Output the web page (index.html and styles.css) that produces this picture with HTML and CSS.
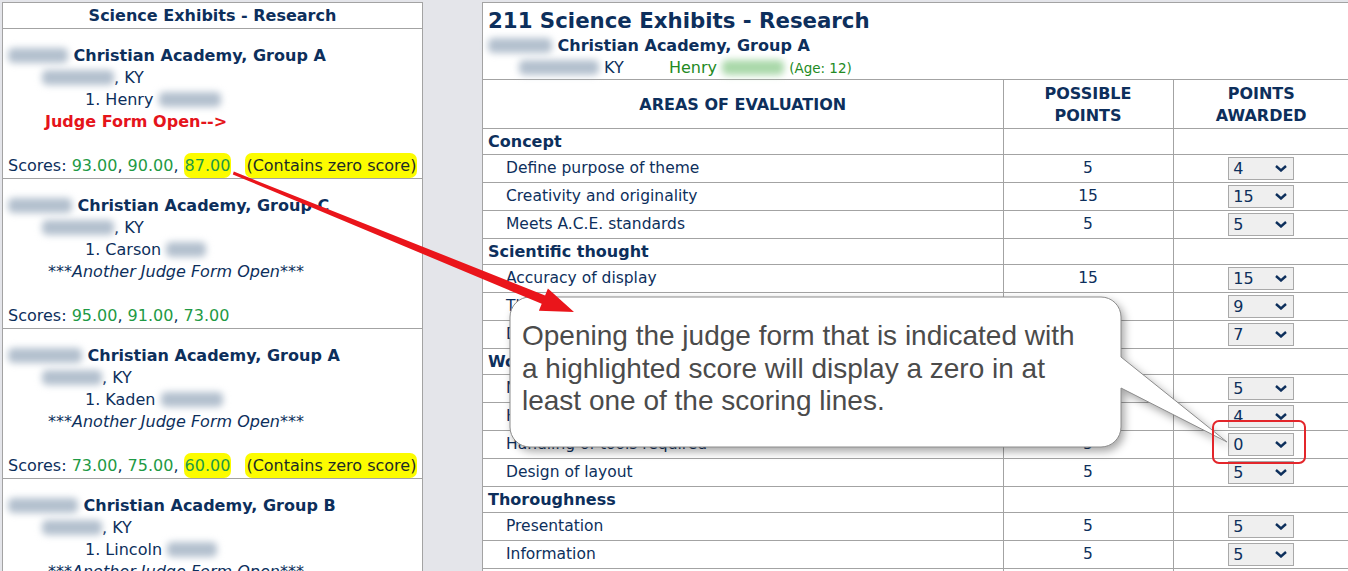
FILE: index.html
```html
<!DOCTYPE html>
<html lang="en">
<head>
    <meta charset="UTF-8">
    <meta name="viewport" content="width=device-width, initial-scale=1.0">
    <title>Judge Form</title>
    <link rel="stylesheet" href="styles.css">
</head>
<body>
    <div class="page">
        <aside class="list">
            <div class="list-head">Science Exhibits - Research</div>

            <div class="entry">
                <div class="school"><span class="blur w60"></span> Christian Academy, Group A</div>
                <div class="city"><span class="blur w72"></span>, KY</div>
                <div class="kid">1. Henry <span class="blur w62"></span></div>
                <div class="open">Judge Form Open--&gt;</div>
                <div class="gap"></div>
                <div class="scores">Scores: <span class="ok">93.00</span>, <span class="ok">90.00</span>, <span class="ok mark">87.00</span><span class="mark zero">(Contains zero score)</span></div>
            </div>

            <div class="entry">
                <div class="school"><span class="blur w64"></span> Christian Academy, Group C</div>
                <div class="city"><span class="blur w72"></span>, KY</div>
                <div class="kid">1. Carson <span class="blur w40"></span></div>
                <div class="other">***Another Judge Form Open***</div>
                <div class="gap"></div>
                <div class="scores">Scores: <span class="ok">95.00</span>, <span class="ok">91.00</span>, <span class="ok">73.00</span></div>
            </div>

            <div class="entry">
                <div class="school"><span class="blur w74"></span> Christian Academy, Group A</div>
                <div class="city"><span class="blur w60"></span>, KY</div>
                <div class="kid">1. Kaden <span class="blur w62"></span></div>
                <div class="other">***Another Judge Form Open***</div>
                <div class="gap"></div>
                <div class="scores">Scores: <span class="ok">73.00</span>, <span class="ok">75.00</span>, <span class="ok mark">60.00</span><span class="mark zero">(Contains zero score)</span></div>
            </div>

            <div class="entry">
                <div class="school"><span class="blur w70"></span> Christian Academy, Group B</div>
                <div class="city"><span class="blur w60"></span>, KY</div>
                <div class="kid">1. Lincoln <span class="blur w50"></span></div>
                <div class="other">***Another Judge Form Open***</div>
            </div>
        </aside>

        <main class="form">
            <div class="form-head">
                <h1 class="title">211 Science Exhibits - Research</h1>
                <div class="sub"><span class="blur w64"></span> Christian Academy, Group A</div>
                <div class="who"><span class="blur w80"></span> KY <span class="name">Henry <span class="blur green w62"></span> <small>(Age: 12)</small></span></div>
            </div>

            <table class="sheet">
                <colgroup>
                    <col class="c-area">
                    <col class="c-poss">
                    <col>
                </colgroup>
                <tr class="head">
                    <th>AREAS OF EVALUATION</th>
                    <th>POSSIBLE<br>POINTS</th>
                    <th>POINTS<br>AWARDED</th>
                </tr>
                <tr class="cat"><td>Concept</td><td></td><td></td></tr>
                <tr><td>Define purpose of theme</td><td>5</td><td><span class="pick"><span>4</span><svg width="12" height="7" viewBox="0 0 12 7"><path d="M1 1l5 4.5L11 1"/></svg></span></td></tr>
                <tr><td>Creativity and originality</td><td>15</td><td><span class="pick"><span>15</span><svg width="12" height="7" viewBox="0 0 12 7"><path d="M1 1l5 4.5L11 1"/></svg></span></td></tr>
                <tr><td>Meets A.C.E. standards</td><td>5</td><td><span class="pick"><span>5</span><svg width="12" height="7" viewBox="0 0 12 7"><path d="M1 1l5 4.5L11 1"/></svg></span></td></tr>
                <tr class="cat"><td>Scientific thought</td><td></td><td></td></tr>
                <tr><td>Accuracy of display</td><td>15</td><td><span class="pick"><span>15</span><svg width="12" height="7" viewBox="0 0 12 7"><path d="M1 1l5 4.5L11 1"/></svg></span></td></tr>
                <tr><td>Thought process shown</td><td>10</td><td><span class="pick"><span>9</span><svg width="12" height="7" viewBox="0 0 12 7"><path d="M1 1l5 4.5L11 1"/></svg></span></td></tr>
                <tr><td>Depth of research</td><td>10</td><td><span class="pick"><span>7</span><svg width="12" height="7" viewBox="0 0 12 7"><path d="M1 1l5 4.5L11 1"/></svg></span></td></tr>
                <tr class="cat"><td>Workmanship</td><td></td><td></td></tr>
                <tr><td>Neatness</td><td>5</td><td><span class="pick"><span>5</span><svg width="12" height="7" viewBox="0 0 12 7"><path d="M1 1l5 4.5L11 1"/></svg></span></td></tr>
                <tr><td>Handmade by student</td><td>5</td><td><span class="pick"><span>4</span><svg width="12" height="7" viewBox="0 0 12 7"><path d="M1 1l5 4.5L11 1"/></svg></span></td></tr>
                <tr><td>Handling of tools required</td><td>5</td><td><span class="pick"><span>0</span><svg width="12" height="7" viewBox="0 0 12 7"><path d="M1 1l5 4.5L11 1"/></svg></span></td></tr>
                <tr><td>Design of layout</td><td>5</td><td><span class="pick"><span>5</span><svg width="12" height="7" viewBox="0 0 12 7"><path d="M1 1l5 4.5L11 1"/></svg></span></td></tr>
                <tr class="cat"><td>Thoroughness</td><td></td><td></td></tr>
                <tr><td>Presentation</td><td>5</td><td><span class="pick"><span>5</span><svg width="12" height="7" viewBox="0 0 12 7"><path d="M1 1l5 4.5L11 1"/></svg></span></td></tr>
                <tr><td>Information</td><td>5</td><td><span class="pick"><span>5</span><svg width="12" height="7" viewBox="0 0 12 7"><path d="M1 1l5 4.5L11 1"/></svg></span></td></tr>
                <tr><td>Bibliography</td><td>5</td><td><span class="pick"><span>5</span><svg width="12" height="7" viewBox="0 0 12 7"><path d="M1 1l5 4.5L11 1"/></svg></span></td></tr>
            </table>
        </main>
    </div>

    <!-- annotation layer drawn over the screenshot -->
    <svg class="marks" width="1348" height="571" viewBox="0 0 1348 571">
        <path class="bubble" d="M530 297H1101A20 20 0 0 1 1121 317V357L1227 442L1121 388V427A20 20 0 0 1 1101 447H530A20 20 0 0 1 510 427V317A20 20 0 0 1 530 297Z"/>
        <rect class="ring" x="1213" y="421" width="92" height="42" rx="6"/>
        <polygon class="arrow" points="233.8,171.6 545.1,295.4 547.9,288.5 574,312 538.9,310.7 541.7,303.8 232.8,174.4"/>
    </svg>
    <div class="note">Opening the judge form that is indicated with<br>a highlighted score will display a zero in at<br>least one of the scoring lines.</div>
</body>
</html>
```

FILE: styles.css
```css
* {
    margin: 0;
    padding: 0;
    box-sizing: border-box;
}

body {
    width: 1348px;
    height: 571px;
    overflow: hidden;
    position: relative;
    background-color: #e4e5ea;
    font-family: "DejaVu Sans", Verdana, sans-serif;
    font-size: 16px;
    color: #0d2f5c;
}

.page {
    display: flex;
    align-items: flex-start;
    gap: 59px;
    padding: 2px 0 0 2px;
}

/* left list */
.list {
    flex: none;
    width: 421px;
    background-color: white;
    border: 1px solid #a3a3a3;
}

.list-head {
    text-align: center;
    font-weight: bold;
    line-height: 25px;
    border-bottom: 1px solid #a3a3a3;
}

.entry {
    padding: 16px 5px 1px;
    line-height: 22px;
    border-bottom: 1px solid #a3a3a3;
    white-space: nowrap;
}

.school {
    font-weight: bold;
}

.city {
    padding-left: 34px;
}

.kid {
    padding-left: 77px;
}

.open {
    padding-left: 37px;
    color: #e5141b;
    font-weight: bold;
}

.other {
    padding-left: 40px;
    font-style: italic;
}

.gap {
    height: 22px;
}

.ok {
    color: #1f9a45;
}

.mark {
    background-color: #fcfc00;
    border-radius: 7px;
    padding: 3px 1px;
}

.zero {
    margin-left: 14px;
    color: #1d2b26;
}

.blur {
    display: inline-block;
    height: 15px;
    vertical-align: -2px;
    background-color: #b3c0ce;
    border-radius: 5px;
    filter: blur(3.5px);
}

.blur.green {
    background-color: #a9d8a9;
}

.w40 { width: 40px; }
.w50 { width: 50px; }
.w60 { width: 60px; }
.w62 { width: 62px; }
.w64 { width: 64px; }
.w70 { width: 70px; }
.w72 { width: 72px; }
.w74 { width: 74px; }
.w80 { width: 80px; }

/* judge form */
.form {
    flex: none;
    width: 868px;
    background-color: white;
    border: 1px solid #a3a3a3;
    border-right: none;
}

.form-head {
    padding: 3px 0 0 5px;
    white-space: nowrap;
}

.title {
    font-size: 21.3px;
    line-height: 29px;
}

.sub {
    font-weight: bold;
    line-height: 22px;
}

.who {
    line-height: 22px;
    padding-left: 31px;
}

.name {
    margin-left: 40px;
    color: #238a23;
}

.name small {
    font-size: 13.5px;
}

.sheet {
    width: 100%;
    table-layout: fixed;
    border-collapse: collapse;
}

.c-area {
    width: 520px;
}

.c-poss {
    width: 170px;
}

.sheet th,
.sheet td {
    border: 1px solid #a3a3a3;
    text-align: center;
    white-space: nowrap;
}

.sheet tr > :first-child {
    border-left: none;
}

.sheet th {
    padding: 3px 0 1px;
    line-height: 22px;
}

.sheet td {
    padding: 2px 0;
    line-height: 23px;
    font-size: 15.5px;
}

.sheet td:first-child {
    text-align: left;
    padding-left: 23px;
}

.sheet tr.cat td {
    font-weight: bold;
    font-size: 16px;
    line-height: 21px;
    padding-left: 5px;
}

.pick {
    display: inline-flex;
    align-items: center;
    justify-content: space-between;
    width: 66px;
    height: 23px;
    padding: 0 6px 0 4px;
    vertical-align: top;
    background-color: #efefef;
    border: 1px solid #a9a9a9;
    font-size: 16px;
    line-height: 21px;
    text-align: left;
}

.pick path {
    fill: none;
    stroke: #0d2f5c;
    stroke-width: 2.4;
}

/* annotation */
.marks {
    position: absolute;
    left: 0;
    top: 0;
}

.bubble {
    fill: white;
    stroke: #8c8c8c;
    stroke-width: 1;
    filter: drop-shadow(3px 4px 4px rgba(0, 0, 0, 0.35));
}

.ring {
    fill: none;
    stroke: #e3262b;
    stroke-width: 2;
}

.arrow {
    fill: #ea151b;
}

.note {
    position: absolute;
    left: 510px;
    top: 297px;
    padding: 23px 0 0 12px;
    font-family: "Liberation Sans", Arial, sans-serif;
    font-size: 28px;
    line-height: 32.5px;
    color: #4b4b4b;
    white-space: nowrap;
}
```
